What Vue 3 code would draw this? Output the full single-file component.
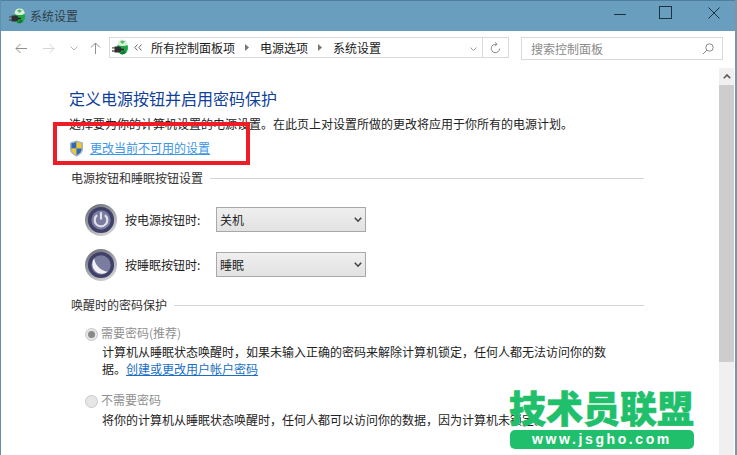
<script setup>
const crumbs = [
  { label: '所有控制面板项', width: 84 },
  { label: '电源选项', width: 48 },
  { label: '系统设置', width: 48 },
]
const actions = [
  { label: '按电源按钮时:', value: '关机', icon: 'power' },
  { label: '按睡眠按钮时:', value: '睡眠', icon: 'sleep' },
]
</script>

<template>
  <div class="window">
    <header class="titlebar">
      <svg class="app-icon" width="17" height="17" viewBox="0 0 17 17">
        <ellipse cx="10.5" cy="9" rx="5.5" ry="6.5" fill="#1fa64a" />
        <path d="M5.5 5.5Q6 0.5 10.5 0.5Q15 0.5 15.8 5.5Q13 7.5 10.5 7Q7.5 7.5 5.5 5.5Z" fill="#d9efd6" />
        <path d="M8 2.5L10.5 1.5L13 2.5L10.5 5Z" fill="#4fb765" />
        <path d="M8 14.5Q11 16.5 14 13.5L12 11.5Z" fill="#0f7a33" />
        <path d="M2.5 7.5H6.5Q9.5 7.5 9.5 10.5Q9.5 13.5 6.5 13.5H2.5Z" fill="#303030" />
        <path d="M0 8.8H3M0 12H3" stroke="#555" stroke-width="1.3" />
        <path d="M9 10.5H12" stroke="#222" stroke-width="1.5" />
      </svg>
      <span class="title-text">系统设置</span>
      <div class="win-buttons">
        <svg width="12" height="12" viewBox="0 0 12 12"><path d="M0 6.5H12" stroke="#1d3342" /></svg>
        <svg class="win-max" width="13" height="13" viewBox="0 0 13 13"><rect x="0.5" y="0.5" width="12" height="12" fill="none" stroke="#1d3342" /></svg>
        <svg width="12" height="12" viewBox="0 0 12 12"><path d="M0.5 0.5L11.5 11.5M11.5 0.5L0.5 11.5" stroke="#1d3342" /></svg>
      </div>
    </header>

    <nav class="navbar">
      <svg class="nav-back" width="12" height="11" viewBox="0 0 12 11"><path d="M12 5.5H1M5.5 1L1 5.5L5.5 10" fill="none" stroke="#8f8f8f" /></svg>
      <svg class="nav-forward" width="12" height="11" viewBox="0 0 12 11"><path d="M0 5.5H11M6.5 1L11 5.5L6.5 10" fill="none" stroke="#d6d6d6" /></svg>
      <svg class="nav-down" width="8" height="5" viewBox="0 0 8 5"><path d="M0.5 0.5L4 4L7.5 0.5" fill="none" stroke="#b5b5b5" /></svg>
      <svg class="nav-up" width="11" height="12" viewBox="0 0 11 12"><path d="M5.5 12V1M1 5.5L5.5 1L10 5.5" fill="none" stroke="#8f8f8f" /></svg>

      <div class="address">
        <svg class="addr-icon" width="17" height="17" viewBox="0 0 17 17">
          <ellipse cx="10.5" cy="9" rx="5.5" ry="6.5" fill="#1fa64a" />
          <path d="M5.5 5.5Q6 0.5 10.5 0.5Q15 0.5 15.8 5.5Q13 7.5 10.5 7Q7.5 7.5 5.5 5.5Z" fill="#d9efd6" />
          <path d="M8 2.5L10.5 1.5L13 2.5L10.5 5Z" fill="#4fb765" />
          <path d="M8 14.5Q11 16.5 14 13.5L12 11.5Z" fill="#0f7a33" />
          <path d="M2.5 7.5H6.5Q9.5 7.5 9.5 10.5Q9.5 13.5 6.5 13.5H2.5Z" fill="#303030" />
          <path d="M0 8.8H3M0 12H3" stroke="#555" stroke-width="1.3" />
          <path d="M9 10.5H12" stroke="#222" stroke-width="1.5" />
        </svg>
        <svg class="addr-more" width="8" height="7" viewBox="0 0 8 7"><path d="M3.5 0.5L0.8 3.5L3.5 6.5M7.5 0.5L4.8 3.5L7.5 6.5" fill="none" stroke="#666" /></svg>
        <template v-for="(crumb, i) in crumbs" :key="crumb.label">
          <span class="crumb" :style="{ width: crumb.width + 'px' }">{{ crumb.label }}</span>
          <svg v-if="i < crumbs.length - 1" class="crumb-sep" width="4" height="7" viewBox="0 0 4 7"><path d="M0 0L4 3.5L0 7Z" fill="#777" /></svg>
        </template>
        <svg class="addr-drop" width="7" height="4" viewBox="0 0 7 4"><path d="M0.5 0.5L3.5 3.5L6.5 0.5" fill="none" stroke="#9a9a9a" /></svg>
        <div class="addr-refresh">
          <svg width="11" height="12" viewBox="0 0 11 12"><path d="M6.5 2.4A4.2 4.2 0 1 0 9.6 6.5M5.3 0.3L7 2.4L4.8 3.8" fill="none" stroke="#8a8a8a" /></svg>
        </div>
      </div>

      <div class="search">
        <span>搜索控制面板</span>
        <svg width="12" height="12" viewBox="0 0 12 12"><circle cx="7.5" cy="4.5" r="3.7" fill="none" stroke="#8a8a8a" /><path d="M4.8 7.2L0.8 11.2" stroke="#8a8a8a" /></svg>
      </div>
    </nav>

    <div class="body">
      <main class="content">
        <h1 class="heading">定义电源按钮并启用密码保护</h1>
        <p class="intro">选择要为你的计算机设置的电源设置。在此页上对设置所做的更改将应用于你所有的电源计划。</p>
        <div class="shield-row">
          <svg width="15" height="17" viewBox="0 0 15 17">
            <path d="M7.5 0.5L14 2.5V8.5C14 12.5 11 15 7.5 16.5C4 15 1 12.5 1 8.5V2.5Z" fill="#a3b1c1" />
            <path d="M7.5 2L7.5 8.5H2.5V3.5Z" fill="#2c69b8" />
            <path d="M7.5 2L12.5 3.5V8.5H7.5Z" fill="#f2c82e" />
            <path d="M2.5 8.5H7.5V15C5 14 2.5 12 2.5 8.5Z" fill="#f2c82e" />
            <path d="M7.5 8.5H12.5C12.5 12 10 14 7.5 15Z" fill="#2c69b8" />
          </svg>
          <a class="link bright">更改当前不可用的设置</a>
        </div>

        <div class="section-title first"><span>电源按钮和睡眠按钮设置</span><i></i></div>

        <div v-for="action in actions" :key="action.label" class="action-row">
          <svg class="round-icon" width="32" height="32" viewBox="0 0 33 33">
            <defs>
              <linearGradient id="rim" x1="0.2" y1="0" x2="0.8" y2="1">
                <stop offset="0" stop-color="#6f6f78" />
                <stop offset="1" stop-color="#d8d8dc" />
              </linearGradient>
            </defs>
            <circle cx="16.5" cy="16.5" r="16.5" fill="url(#rim)" />
            <circle cx="16.5" cy="16.5" r="13.5" fill="#3f4168" />
            <circle cx="16.5" cy="16.5" r="10" fill="#7a7da0" />
            <template v-if="action.icon === 'power'">
              <path d="M12.5 11.5A6.5 6.5 0 1 0 20.5 11.5" fill="none" stroke="#e2e2ea" stroke-width="2.2" />
              <path d="M16.5 8.5V16" stroke="#e2e2ea" stroke-width="2.2" />
            </template>
            <path v-else d="M9.5 9.5A10 10 0 0 0 23.5 23.5A16 16 0 0 1 9.5 9.5Z" fill="#f2f2f5" />
          </svg>
          <span class="action-label">{{ action.label }}</span>
          <div class="select">
            <span>{{ action.value }}</span>
            <svg width="8" height="6" viewBox="0 0 8 6"><path d="M0.8 0.8L4 4.2L7.2 0.8" fill="none" stroke="#444" stroke-width="1.6" /></svg>
          </div>
        </div>

        <div class="section-title second"><span>唤醒时的密码保护</span><i></i></div>

        <div class="radio-block one">
          <div class="radio-line">
            <span class="radio checked"></span>
            <span class="radio-label">需要密码(推荐)</span>
          </div>
          <p class="desc">计算机从睡眠状态唤醒时，如果未输入正确的密码来解除计算机锁定，任何人都无法访问你的数</p>
          <p class="desc">据。<a class="link">创建或更改用户帐户密码</a></p>
        </div>

        <div class="radio-block two">
          <div class="radio-line">
            <span class="radio"></span>
            <span class="radio-label">不需要密码</span>
          </div>
          <p class="desc">将你的计算机从睡眠状态唤醒时，任何人都可以访问你的数据，因为计算机未锁定。</p>
        </div>
      </main>

      <aside class="scrollbar">
        <div class="scroll-up">
          <svg width="8" height="5" viewBox="0 0 8 5"><path d="M0.8 4.2L4 1L7.2 4.2" fill="none" stroke="#555" stroke-width="1.6" /></svg>
        </div>
        <div class="scroll-thumb"></div>
      </aside>
    </div>

    <div class="red-box"></div>

    <div class="watermark">
      <div class="wm-title">技术员联盟</div>
      <div class="wm-url">www.jsgho.com</div>
    </div>
  </div>
</template>

<style scoped>
.window {
  position: relative;
  width: 737px;
  height: 455px;
  overflow: hidden;
  background: #fff;
  box-sizing: border-box;
  border-left: 1px solid #648fab;
  border-right: 2px solid #7f95a3;
  font-family: "Noto Sans CJK SC", "Noto Sans", sans-serif;
  font-size: 12px;
  color: #1f1f1f;
}
.titlebar {
  height: 31px;
  box-sizing: border-box;
  border-top: 1px solid #4f7f9c;
  background: #6a9ebf;
  display: flex;
  align-items: center;
  padding-left: 8px;
}
.app-icon { flex: none; }
.title-text { margin-left: 4px; width: 48px; line-height: 16px; color: #2e3f4a; }
.win-buttons {
  margin-left: auto;
  display: flex;
  align-items: center;
  gap: 33px;
  padding: 0 15px 0 0;
}
.win-buttons svg { display: block; }
.win-buttons .win-max { margin: -8px 3px 0 0; }
.win-buttons svg:first-child { margin-top: -5px; }
.win-buttons svg:last-child { margin-top: -7px; }
.navbar {
  height: 37px;
  display: flex;
  align-items: flex-start;
  position: relative;
}
.nav-back { margin: 12px 0 0 14px; }
.nav-forward { margin: 12px 0 0 16px; }
.nav-down { margin: 15px 0 0 15px; }
.nav-up { margin: 11px 0 0 12px; }
.address {
  margin: 6px 0 0 8px;
  width: 400px;
  height: 21px;
  box-sizing: border-box;
  border: 1px solid #d9d9d9;
  display: flex;
  align-items: center;
  position: relative;
}
.addr-icon { margin-left: 2px; flex: none; }
.addr-more { margin-left: 5px; flex: none; }
.crumb { line-height: 16px; color: #1a1a1a; }
.addr-more + .crumb { margin-left: 9px; }
.crumb-sep { margin: 0 11px 0 10px; flex: none; }
.addr-drop { position: absolute; right: 31px; top: 9px; }
.addr-refresh {
  position: absolute;
  right: 0;
  top: 0;
  bottom: 0;
  width: 25px;
  border-left: 1px solid #d9d9d9;
  display: flex;
  align-items: center;
  justify-content: center;
}
.search {
  margin: 6px 0 0 12px;
  width: 202px;
  height: 23px;
  box-sizing: border-box;
  border: 1px solid #d9d9d9;
  display: flex;
  align-items: center;
  justify-content: space-between;
  padding: 0 8px 0 9px;
  color: #8a8a8a;
}
.body {
  display: flex;
  height: 387px;
}
.content {
  width: 718px;
  flex: none;
  padding-left: 68px;
  box-sizing: border-box;
}
.heading {
  margin: 20px 0 0;
  font-size: 16px;
  font-weight: 400;
  line-height: 20px;
  color: #0f3f9b;
}
.intro { margin: 8px 0 0; line-height: 16px; white-space: nowrap; color: #222; }
.shield-row {
  margin-top: 7px;
  height: 18px;
  display: flex;
  align-items: center;
  gap: 6px;
}
.link { color: #1a6fc4; text-decoration: underline; }
.link.bright { color: #3b95e6; line-height: 16px; }
.section-title {
  display: flex;
  align-items: center;
  width: 573px;
  margin-left: 2px;
  height: 16px;
  line-height: 16px;
  color: #333;
}
.section-title.first { margin-top: 13px; }
.section-title.second { margin-top: 16px; }
.section-title i { flex: 1; height: 1px; background: #d4d4d4; margin-left: 7px; }
.action-row {
  display: flex;
  align-items: center;
  height: 33px;
  margin: 0 0 12px 16px;
}
.section-title.first + .action-row { margin-top: 17px; }
.round-icon { flex: none; }
.action-label { margin-left: 8px; width: 91px; line-height: 16px; }
.select {
  width: 150px;
  height: 25px;
  box-sizing: border-box;
  border: 1px solid #a8a8a8;
  background: linear-gradient(#efefef, #e2e2e2);
  display: flex;
  align-items: center;
  justify-content: space-between;
  padding: 0 3px 0 3px;
}
.radio-block { margin-left: 16px; }
.radio-block.one { margin-top: 12px; }
.radio-block.two { margin-top: 15px; }
.radio-line { display: flex; align-items: center; height: 16px; }
.radio {
  width: 13px;
  height: 13px;
  box-sizing: border-box;
  border: 1px solid #c8c8c8;
  border-radius: 50%;
  background: #e6e6e6;
  flex: none;
  display: flex;
  align-items: center;
  justify-content: center;
  margin-top: 2px;
}
.radio.checked::after {
  content: "";
  width: 7px;
  height: 7px;
  border-radius: 50%;
  background: #8a8a8a;
}
.radio-label { margin-left: 3px; color: #8f8f8f; line-height: 16px; }
.desc { margin: 1px 0 0 17px; line-height: 16px; white-space: nowrap; color: #222; }
.radio-line + .desc { margin-top: 3px; }
.two .radio-line + .desc { margin-top: 4px; }
.scrollbar {
  width: 15px;
  flex: none;
  background: #f0f0f0;
  display: flex;
  flex-direction: column;
}
.scroll-up {
  height: 17px;
  display: flex;
  align-items: center;
  justify-content: center;
}
.scroll-up svg { display: block; }
.scroll-thumb { height: 277px; background: #cdcdcd; }

.red-box {
  position: absolute;
  left: 52px;
  top: 122px;
  width: 197px;
  height: 43px;
  box-sizing: border-box;
  border: 4px solid #ee1c25;
}
.watermark {
  position: absolute;
  left: 509px;
  top: 387px;
  width: 184px;
}
.wm-title {
  font-size: 37px;
  font-weight: 900;
  line-height: 41px;
  white-space: nowrap;
  color: #1fbf6c;
  margin-left: -1px;
  -webkit-text-stroke: 0.6px #1fbf6c;
}
.wm-url {
  margin-top: 2px;
  height: 19px;
  border-radius: 5px;
  background: #1fbf6c;
  color: #fff;
  font-family: "Liberation Sans", sans-serif;
  font-weight: 700;
  font-size: 14px;
  letter-spacing: 2.6px;
  line-height: 18px;
  text-align: center;
}
</style>

<style>
html, body { margin: 0; overflow: hidden; background: #fff; }
</style>
